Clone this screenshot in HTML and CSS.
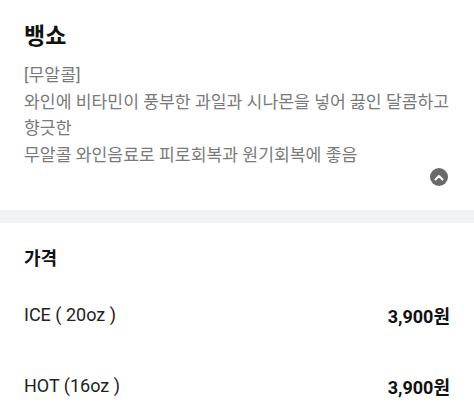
FILE: index.html
```html
<!DOCTYPE html>
<html lang="ko">
<head>
<meta charset="utf-8">
<link rel="stylesheet" href="styles.css">
</head>
<body>
<section class="info">
  <h1 class="title">뱅쇼</h1>
  <p class="desc">[무알콜]<br>와인에 비타민이 풍부한 과일과 시나몬을 넣어 끓인 달콤하고 향긋한<br>무알콜 와인음료로 피로회복과 원기회복에 좋음</p>
  <div class="toggle-row">
    <button class="toggle" aria-label="접기">
      <svg width="10" height="7" viewBox="0 0 10 7"><path d="M1.5 5.5 L5 2 L8.5 5.5" fill="none" stroke="#fff" stroke-width="2" stroke-linecap="round" stroke-linejoin="round"/></svg>
    </button>
  </div>
</section>
<div class="divider"></div>
<section class="price">
  <h2 class="price-title">가격</h2>
  <ul class="price-list">
    <li class="price-row"><span class="opt">ICE ( 20oz )</span><span class="amt">3,900원</span></li>
    <li class="price-row"><span class="opt">HOT (16oz )</span><span class="amt">3,900원</span></li>
  </ul>
</section>
</body>
</html>
```
FILE: styles.css
```css
* { box-sizing: border-box; }
html, body { margin: 0; padding: 0; background: #fff; }
body {
  font-family: Roboto, "Noto Sans CJK KR", sans-serif;
  color: #111;
  width: 474px;
}
.info {
  padding: 17px 22px 0 24px;
}
.title {
  margin: 0;
  font-family: "Noto Sans CJK KR", sans-serif;
  font-size: 23px;
  font-weight: 700;
  line-height: 34px;
  color: #111;
}
.desc {
  margin: 11px 0 0 0;
  font-size: 17.2px;
  line-height: 26.5px;
  color: #7a7a7a;
  word-break: keep-all;
}
.toggle-row {
  display: flex;
  justify-content: flex-end;
  padding: 0 4px 0 0;
  height: 42px;
}
.toggle {
  width: 18px;
  height: 18px;
  border-radius: 50%;
  border: 0;
  padding: 0;
  background: #6a6a6a;
  display: flex;
  align-items: center;
  justify-content: center;
}
.divider {
  height: 13px;
  background: #f2f3f5;
}
.price {
  padding: 20px 24px 0 24px;
}
.price-title {
  margin: 0;
  font-family: "Noto Sans CJK KR", sans-serif;
  font-size: 18px;
  font-weight: 700;
  line-height: 28px;
}
.price-list {
  list-style: none;
  margin: 0;
  padding: 0;
}
.price-row {
  display: flex;
  justify-content: space-between;
  align-items: center;
  height: 71px;
  font-size: 18px;
}
.price-row:first-child { margin-top: 8px; }
.opt { color: #222; }
.amt { font-weight: 700; color: #111; }
```
